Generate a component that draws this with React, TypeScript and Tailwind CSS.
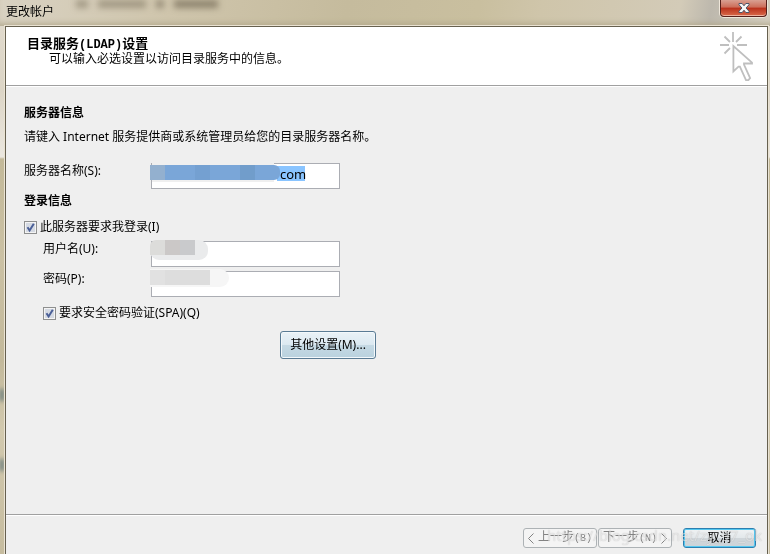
import { useState } from 'react';
import type { ReactNode } from 'react';

const Checkbox = ({ id, children }: { id: string; children: ReactNode }) => {
  const [checked, setChecked] = useState(true);

  return (
    <label htmlFor={id} className="flex h-4 w-fit items-center gap-[3px] whitespace-nowrap">
      <span className="relative block h-[13px] w-[13px]">
        <input
          id={id}
          type="checkbox"
          checked={checked}
          onChange={(e) => setChecked(e.target.checked)}
          className="block h-[13px] w-[13px] appearance-none border border-[#8e8f8f] bg-[#d5dae3] shadow-[inset_0_0_0_1px_#f4f4f4]"
        />
        {checked && (
          <svg viewBox="0 0 13 13" className="pointer-events-none absolute top-0 left-0 h-[13px] w-[13px]">
            <path d="M3.5 6.2 L5.6 9.5 L9.8 2.8" fill="none" stroke="#4a5f97" strokeWidth="2" />
          </svg>
        )}
      </span>
      {children}
    </label>
  );
};

const fieldClass =
  'block h-[26px] w-full border border-[#abadb3] bg-white px-1 text-[13px] text-black outline-none';

const stepClass =
  'flex h-5 w-[74px] items-center justify-center gap-1 rounded-[3px] border border-[#adb2b5] bg-[#f4f4f4] whitespace-nowrap text-[#838383]';

const Chevron = ({ d }: { d: string }) => (
  <svg viewBox="0 0 6 11" className="h-[11px] w-[6px]" fill="none" stroke="currentColor">
    <path d={d} />
  </svg>
);

const TitleBar = () => (
  <header className="relative flex h-[26px] items-start justify-between bg-[linear-gradient(100deg,#d9d2c2_0%,#cfc5ac_22%,#c5bb9d_45%,#c9bf9f_62%,#cfc5aa_70%,#d3cbb8_88%,#bdb8ad_92%,#d6d0c1_100%)] pr-[3px] pl-[6px] shadow-[inset_0_-6px_6px_-4px_#b0a68a]">
    <div aria-hidden="true" className="absolute top-0 left-[76px] flex gap-[10px] blur-[3px]">
      <span className="h-2 w-3 bg-[#736955]/50" />
      <span className="h-2 w-12 bg-[#736955]/50" />
      <span className="h-2 w-2 bg-[#736955]/60" />
      <span className="h-2 w-11 bg-[#736955]/70" />
    </div>
    <h1 className="relative pt-1 text-xs leading-4">更改帐户</h1>
    <button
      type="button"
      aria-label="关闭"
      className="flex h-[17px] w-[47px] items-center justify-center rounded-b-[4px] border border-t-0 border-[#56201a] bg-[linear-gradient(#d9a092_0%,#cc6d59_45%,#b9301b_50%,#d96a4a_100%)] shadow-[inset_0_-1px_0_#eeb29f,0_0_0_1px_#eee6da]"
    >
      <svg viewBox="0 0 12 10" className="h-[10px] w-3">
        <path
          d="M1 .5h3.2L6 2.8 7.8.5H11v1.3L8 5l3 3.2v1.3H7.8L6 7.2 4.2 9.5H1V8.2L4 5 1 1.8z"
          fill="#f7f7f7"
          stroke="#4d566a"
        />
      </svg>
    </button>
  </header>
);

const ClickCursor = () => (
  <svg viewBox="0 0 36 52" className="h-[52px] w-9 shrink-0" fill="none" stroke="#bfbfbf" strokeWidth="1.8">
    <path d="M15 2v10M2 15h9M19 15h10M6.5 6.5l5.5 5.5M23.5 6.5L18 12M6.5 23.5l5.5-5.5" />
    <path d="M15.4 16v25.5l5.1-4.8h1.4L28 50.2h2.4l1.7-2L26 34.5v-1h8v-.8z" />
  </svg>
);

const Footer = () => (
  <footer className="relative flex h-10 items-start justify-end border-t border-[#a0a0a0] pt-[13px] pr-[11px] shadow-[inset_0_1px_0_#fff]">
    <button type="button" disabled className={stepClass}>
      <Chevron d="M5.5 .5l-5 5 5 5" />
      <span>
        上一步<span className="font-['Liberation_Mono',monospace] text-[10px]">(B)</span>
      </span>
    </button>
    <button type="button" disabled className={`${stepClass} ml-px`}>
      <span>
        下一步<span className="font-['Liberation_Mono',monospace] text-[10px]">(N)</span>
      </span>
      <Chevron d="M.5 .5l5 5-5 5" />
    </button>
    <button
      type="button"
      className="ml-[11px] h-5 w-[73px] rounded-[3px] border border-[#2c7fb0] bg-[linear-gradient(#f0f2f3_0%,#e3e8eb_48%,#d0d6da_52%,#ccd4d9_100%)] shadow-[inset_0_0_0_1px_#55c8f0]"
    >
      取消
    </button>
    <span className="pointer-events-none absolute top-[10px] right-[5px] text-[15px] leading-5 text-white/60 [text-shadow:0_0_1px_#00000040]">
      https://blog.csdn.net/zy_97_ok
    </span>
  </footer>
);

export default function App() {
  return (
    <div className="relative flex min-h-screen flex-col bg-[linear-gradient(#e2dccf_0px,#dcd5c6_90px,#ebe7df_157px,#c3b999_159px,#cbc1a4_260px,#c3b99b_360px,#d2c9ae_430px,#c6bc9f_554px)] font-['Noto_Sans','Noto_Sans_CJK_SC',sans-serif] text-xs leading-4 text-black">
      <TitleBar />
      <span aria-hidden="true" className="absolute top-[389px] left-0 h-3 w-1 bg-[#66797a] blur-[2px]" />
      <span aria-hidden="true" className="absolute top-[459px] left-0 h-3 w-1 bg-[#66797a] blur-[2px]" />
      <main className="relative mr-[2px] ml-[5px] flex grow flex-col border border-b-0 border-[#66604f] bg-[#efefef] shadow-[0_0_0_1px_#eae3d3]">
        <section className="flex h-[59px] items-start justify-between border-b border-[#a0a0a0] bg-white pt-[3px] pr-[13px] pl-[21px] shadow-[0_1px_0_#fff]">
          <div className="pt-[5px]">
            <h2 className="text-[13px] leading-4 font-bold">
              目录服务
              <span className="font-['Liberation_Mono',monospace] text-xs leading-none">(LDAP)</span>
              设置
            </h2>
            <p className="pl-[22px] leading-4">可以输入必选设置以访问目录服务中的信息。</p>
          </div>
          <ClickCursor />
        </section>

        <form className="grow px-[18px] pt-[19px]" onSubmit={(e) => e.preventDefault()}>
          <h3 className="font-bold">服务器信息</h3>
          <p className="mt-2">请键入 Internet 服务提供商或系统管理员给您的目录服务器名称。</p>
          <div className="mt-[18px] flex items-start">
            <label htmlFor="server" className="w-[127px]">
              服务器名称(S):
            </label>
            <div className="relative w-[189px]">
              <input id="server" defaultValue="com" className={`${fieldClass} pb-1 pl-[128px]`} />
              <span className="pointer-events-none absolute top-[3px] left-[126px] h-[15px] w-[28px] bg-[#89c4ff] mix-blend-multiply" />
              <span className="absolute top-0 left-px h-[19px] w-[122px] bg-[#efefef]" />
              <span className="absolute top-[2px] -left-px flex h-[15px] w-[130px] overflow-hidden rounded-r-[6px] bg-[#7aa6d8]">
                <span className="w-[15px] bg-[#93b0cf]" />
                <span className="ml-[30px] w-[15px] bg-[#74a0d1]" />
                <span className="ml-[30px] w-[15px] bg-[#719dcb]" />
              </span>
            </div>
          </div>

          <h3 className="mt-1 font-bold">登录信息</h3>
          <div className="mt-[10px]">
            <Checkbox id="login">此服务器要求我登录(I)</Checkbox>
          </div>
          <div className="mt-[6px] flex items-start pl-[19px]">
            <label htmlFor="user" className="w-[108px]">
              用户名(U):
            </label>
            <div className="relative w-[189px]">
              <input id="user" className={fieldClass} />
              <span className="absolute -top-px -left-px h-5 w-[58px] rounded-[9px] bg-[#eaebec]" />
              <span className="absolute -top-px -left-px flex h-[15px]">
                <span className="w-[15px] rounded-tl-[6px] bg-[#dcdcda]" />
                <span className="w-[15px] bg-[#cbc8c7]" />
                <span className="w-[15px] bg-[#c9cacc]" />
              </span>
            </div>
          </div>
          <div className="mt-1 flex items-start pl-[19px]">
            <label htmlFor="password" className="w-[108px]">
              密码(P):
            </label>
            <div className="relative w-[189px]">
              <input id="password" type="password" className={fieldClass} />
              <span className="absolute -top-[2px] -left-px h-[18px] w-[79px] rounded-r-[9px] bg-[#f6f6f6]" />
              <span className="absolute -top-px -left-px flex h-[15px]">
                <span className="w-[15px] bg-[#e1e1e1]" />
                <span className="w-[45px] bg-[#dddddd]" />
              </span>
            </div>
          </div>
          <div className="mt-2 pl-[19px]">
            <Checkbox id="spa">要求安全密码验证(SPA)(Q)</Checkbox>
          </div>
          <button
            type="button"
            className="mt-[10px] ml-64 block h-7 w-24 rounded-[3px] border border-[#5a7b94] bg-[linear-gradient(#eaf2f7_0%,#dce9f1_48%,#c5d9e4_52%,#b9d1de_100%)] shadow-[inset_0_0_0_1px_#f3f8fb]"
          >
            其他设置(M)...
          </button>
        </form>
        <Footer />
      </main>
    </div>
  );
}
